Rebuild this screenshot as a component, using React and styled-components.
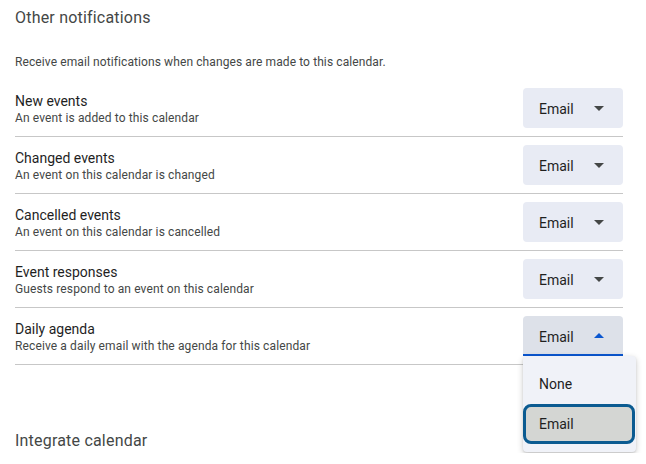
import React, { useState } from 'react'
import styled, { createGlobalStyle } from 'styled-components'

const GlobalStyle = createGlobalStyle`
  body {
    margin: 0;
    background: #fff;
    font-family: Roboto, "Liberation Sans", Arial, sans-serif;
  }
`

const Page = styled.div`
  padding: 6px 0 0 15px;
  width: 608px;
`

const SectionTitle = styled.h2`
  margin: 0;
  font-size: 16px;
  line-height: 24px;
  font-weight: 400;
  letter-spacing: 0.2px;
  color: #444746;
`

const Intro = styled.p`
  margin: 24px 0 10px;
  font-size: 12px;
  line-height: 16px;
  letter-spacing: 0.1px;
  color: #444746;
`

const Row = styled.div`
  display: flex;
  align-items: center;
  justify-content: space-between;
  height: 56px;
  border-bottom: 1px solid #c7c7c7;
`

const Label = styled.div`
  display: flex;
  flex-direction: column;
  padding-top: 2px;
`

const RowTitle = styled.span`
  font-size: 14px;
  line-height: 18px;
  color: #1f1f1f;
`

const RowHint = styled.span`
  font-size: 12px;
  line-height: 16px;
  letter-spacing: 0.12px;
  color: #444746;
`

const SelectWrap = styled.div`
  position: relative;
`

const SelectButton = styled.button`
  display: flex;
  align-items: center;
  justify-content: space-between;
  box-sizing: border-box;
  width: 100px;
  height: 40px;
  padding: 1px 19px 0 16px;
  border: none;
  box-shadow: ${({ open }) => (open ? 'inset 0 -2px 0 #0b57d0' : 'none')};
  border-radius: ${({ open }) => (open ? '4px 4px 0 0' : '4px')};
  background: ${({ open }) => (open ? '#dde1e9' : '#e8ebf4')};
  font-family: inherit;
  font-size: 14px;
  color: #1f1f1f;
  cursor: pointer;
`

const Caret = styled.span`
  width: 0;
  height: 0;
  border-left: 5px solid transparent;
  border-right: 5px solid transparent;
  ${({ open }) =>
    open
      ? 'border-bottom: 5px solid #0b57d0;'
      : 'border-top: 5px solid #444746;'}
  margin-top: ${({ open }) => (open ? '-2px' : '0')};
`

const Menu = styled.ul`
  position: absolute;
  top: 100%;
  left: 0;
  width: 113px;
  margin: 0;
  padding: 8px 0;
  list-style: none;
  background: #f0f2f8;
  border-radius: 4px;
  box-shadow: 0 2px 6px rgba(0, 0, 0, 0.2), 0 1px 2px rgba(0, 0, 0, 0.1);
  z-index: 2;
`

const MenuItem = styled.li`
  box-sizing: border-box;
  height: 40px;
  margin: 0 1px 0 0;
  display: flex;
  align-items: center;
  padding-left: ${({ active }) => (active ? '13px' : '16px')};
  font-size: 14px;
  color: #1f1f1f;
  border-radius: 8px;
  ${({ active }) =>
    active &&
    `
    background: #d4d6d3;
    border: 3px solid #0b5b91;
  `}
`

const NextTitle = styled(SectionTitle)`
  margin-top: 64px;
`

const rows = [
  { title: 'New events', hint: 'An event is added to this calendar' },
  { title: 'Changed events', hint: 'An event on this calendar is changed' },
  { title: 'Cancelled events', hint: 'An event on this calendar is cancelled' },
  { title: 'Event responses', hint: 'Guests respond to an event on this calendar' },
  { title: 'Daily agenda', hint: 'Receive a daily email with the agenda for this calendar', open: true },
]

const Select = ({ open }) => (
  <SelectWrap>
    <SelectButton open={open}>
      Email
      <Caret open={open} />
    </SelectButton>
    {open && (
      <Menu>
        <MenuItem>None</MenuItem>
        <MenuItem active>Email</MenuItem>
      </Menu>
    )}
  </SelectWrap>
)

const App = () => {
  const [items] = useState(rows)
  return (
    <Page>
      <GlobalStyle />
      <SectionTitle>Other notifications</SectionTitle>
      <Intro>Receive email notifications when changes are made to this calendar.</Intro>
      {items.map(r => (
        <Row key={r.title}>
          <Label>
            <RowTitle>{r.title}</RowTitle>
            <RowHint>{r.hint}</RowHint>
          </Label>
          <Select open={r.open} />
        </Row>
      ))}
      <NextTitle>Integrate calendar</NextTitle>
    </Page>
  )
}

export default App
